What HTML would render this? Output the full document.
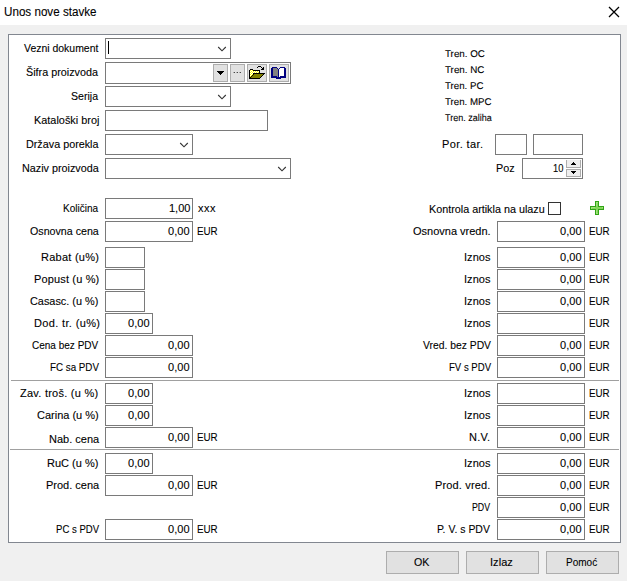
<!DOCTYPE html>
<html lang="sr"><head><meta charset="utf-8"><title>Unos nove stavke</title>
<style>
html,body{margin:0;padding:0}
html{background:#f0f0f0}
body{width:627px;height:581px;background:#f0f0f0;position:relative;overflow:hidden;font-family:"Liberation Sans",sans-serif;font-size:11px;color:#000}
.tb{position:absolute;left:0;top:0;width:627px;height:25px;background:#fff}
.pn{position:absolute;left:8px;top:34px;width:611px;height:507px;background:#fff;border:1px solid #828790}
.t{position:absolute;white-space:pre;line-height:14px;height:14px;-webkit-text-stroke:0.1px #000}
.b{position:absolute;box-sizing:border-box;border:1px solid #7a7a7a;background:#fff}
.v{position:absolute;right:2px;top:3px;line-height:14px;white-space:pre}
.hr{position:absolute;left:11px;width:608px;height:1px;background:#a0a0a0}
.btn{position:absolute;box-sizing:border-box;border:1px solid #adadad;background:#e1e1e1;width:73px;height:23px;top:551px}
.sb{position:absolute;box-sizing:border-box;border:1px solid #adadad;background:#e1e1e1}
svg{display:block}
</style></head><body>
<div class="tb"></div>
<div class="pn"></div>
<svg style="position:absolute;left:608px;top:6px" width="12" height="12" viewBox="0 0 12 12"><path d="M1 1 L11 11 M11 1 L1 11" stroke="#000" stroke-width="1.25" fill="none"/></svg>
<div class="hr" style="top:380px"></div>
<div class="hr" style="top:449px;left:10px;width:609px"></div>
<div class="b" style="left:105px;top:38px;width:126px;height:21px"></div><svg style="position:absolute;left:217px;top:46px" width="10" height="6" viewBox="0 0 10 6"><path d="M1.2 1 L5 4.8 L8.8 1" stroke="#333" stroke-width="1.1" fill="none"/></svg>
<div class="b" style="left:105px;top:86px;width:126px;height:21px"></div><svg style="position:absolute;left:217px;top:94px" width="10" height="6" viewBox="0 0 10 6"><path d="M1.2 1 L5 4.8 L8.8 1" stroke="#333" stroke-width="1.1" fill="none"/></svg>
<div class="b" style="left:105px;top:134px;width:88px;height:21px"></div><svg style="position:absolute;left:179px;top:142px" width="10" height="6" viewBox="0 0 10 6"><path d="M1.2 1 L5 4.8 L8.8 1" stroke="#333" stroke-width="1.1" fill="none"/></svg>
<div class="b" style="left:105px;top:158px;width:186px;height:21px"></div><svg style="position:absolute;left:277px;top:166px" width="10" height="6" viewBox="0 0 10 6"><path d="M1.2 1 L5 4.8 L8.8 1" stroke="#333" stroke-width="1.1" fill="none"/></svg>
<div style="position:absolute;left:108px;top:41px;width:1px;height:13px;background:#000"></div>
<div class="b" style="left:105px;top:62px;width:186px;height:22px"></div>
<div class="sb" style="left:213px;top:64px;width:15px;height:18px"></div><svg style="position:absolute;left:217px;top:71px" width="7" height="4" viewBox="0 0 7 4" shape-rendering="crispEdges"><rect x="0" y="0" width="7" height="1" fill="#000"/><rect x="1" y="1" width="5" height="1" fill="#000"/><rect x="2" y="2" width="3" height="1" fill="#000"/><rect x="3" y="3" width="1" height="1" fill="#000"/></svg>
<div class="sb" style="left:230px;top:64px;width:15px;height:18px"></div><div class="t" style="left:233px;top:63px;font-size:9px;letter-spacing:0.48px;color:#000;will-change:transform">...</div>
<div class="sb" style="left:247px;top:64px;width:20px;height:18px"></div><svg style="position:absolute;left:249px;top:66px" width="16" height="13" viewBox="0 0 16 13" shape-rendering="crispEdges"><rect x="9" y="0" width="3" height="1" fill="#000"/><rect x="8" y="1" width="1" height="1" fill="#000"/><rect x="12" y="1" width="1" height="1" fill="#000"/><rect x="14" y="1" width="1" height="1" fill="#000"/><rect x="13" y="2" width="2" height="1" fill="#000"/><rect x="1" y="3" width="3" height="1" fill="#000"/><rect x="12" y="3" width="3" height="1" fill="#000"/><rect x="0" y="4" width="1" height="1" fill="#000"/><rect x="1" y="4" width="1" height="1" fill="#ffff00"/><rect x="2" y="4" width="1" height="1" fill="#fff"/><rect x="3" y="4" width="1" height="1" fill="#ffff00"/><rect x="4" y="4" width="7" height="1" fill="#000"/><rect x="0" y="5" width="1" height="1" fill="#000"/><rect x="1" y="5" width="1" height="1" fill="#fff"/><rect x="2" y="5" width="1" height="1" fill="#ffff00"/><rect x="3" y="5" width="1" height="1" fill="#fff"/><rect x="4" y="5" width="1" height="1" fill="#ffff00"/><rect x="5" y="5" width="1" height="1" fill="#fff"/><rect x="6" y="5" width="1" height="1" fill="#ffff00"/><rect x="7" y="5" width="1" height="1" fill="#fff"/><rect x="8" y="5" width="1" height="1" fill="#ffff00"/><rect x="9" y="5" width="1" height="1" fill="#fff"/><rect x="10" y="5" width="1" height="1" fill="#000"/><rect x="0" y="6" width="1" height="1" fill="#000"/><rect x="1" y="6" width="1" height="1" fill="#ffff00"/><rect x="2" y="6" width="1" height="1" fill="#fff"/><rect x="3" y="6" width="1" height="1" fill="#ffff00"/><rect x="4" y="6" width="1" height="1" fill="#fff"/><rect x="5" y="6" width="1" height="1" fill="#ffff00"/><rect x="6" y="6" width="1" height="1" fill="#fff"/><rect x="7" y="6" width="1" height="1" fill="#ffff00"/><rect x="8" y="6" width="1" height="1" fill="#fff"/><rect x="9" y="6" width="1" height="1" fill="#ffff00"/><rect x="10" y="6" width="1" height="1" fill="#000"/><rect x="0" y="7" width="1" height="1" fill="#000"/><rect x="1" y="7" width="1" height="1" fill="#fff"/><rect x="2" y="7" width="1" height="1" fill="#ffff00"/><rect x="3" y="7" width="1" height="1" fill="#fff"/><rect x="4" y="7" width="12" height="1" fill="#000"/><rect x="0" y="8" width="1" height="1" fill="#000"/><rect x="1" y="8" width="1" height="1" fill="#ffff00"/><rect x="2" y="8" width="1" height="1" fill="#fff"/><rect x="3" y="8" width="1" height="1" fill="#ffff00"/><rect x="4" y="8" width="1" height="1" fill="#000"/><rect x="5" y="8" width="9" height="1" fill="#808000"/><rect x="14" y="8" width="1" height="1" fill="#000"/><rect x="0" y="9" width="1" height="1" fill="#000"/><rect x="1" y="9" width="1" height="1" fill="#fff"/><rect x="2" y="9" width="1" height="1" fill="#ffff00"/><rect x="3" y="9" width="1" height="1" fill="#000"/><rect x="4" y="9" width="9" height="1" fill="#808000"/><rect x="13" y="9" width="1" height="1" fill="#000"/><rect x="0" y="10" width="1" height="1" fill="#000"/><rect x="1" y="10" width="1" height="1" fill="#ffff00"/><rect x="2" y="10" width="1" height="1" fill="#000"/><rect x="3" y="10" width="9" height="1" fill="#808000"/><rect x="12" y="10" width="1" height="1" fill="#000"/><rect x="0" y="11" width="2" height="1" fill="#000"/><rect x="2" y="11" width="9" height="1" fill="#808000"/><rect x="11" y="11" width="1" height="1" fill="#000"/><rect x="0" y="12" width="11" height="1" fill="#000"/></svg>
<div class="sb" style="left:269px;top:64px;width:20px;height:18px"></div><svg style="position:absolute;left:271px;top:67px" width="15" height="12" viewBox="0 0 15 12" shape-rendering="crispEdges"><rect x="1" y="0" width="5" height="1" fill="#000080"/><rect x="9" y="0" width="5" height="1" fill="#000080"/><rect x="0" y="1" width="2" height="1" fill="#000080"/><rect x="2" y="1" width="4" height="1" fill="#808080"/><rect x="6" y="1" width="1" height="1" fill="#000080"/><rect x="8" y="1" width="1" height="1" fill="#000080"/><rect x="9" y="1" width="4" height="1" fill="#fff"/><rect x="13" y="1" width="2" height="1" fill="#000080"/><rect x="0" y="2" width="2" height="1" fill="#000080"/><rect x="2" y="2" width="5" height="1" fill="#808080"/><rect x="7" y="2" width="1" height="1" fill="#000080"/><rect x="8" y="2" width="5" height="1" fill="#fff"/><rect x="13" y="2" width="2" height="1" fill="#000080"/><rect x="0" y="3" width="2" height="1" fill="#000080"/><rect x="2" y="3" width="5" height="1" fill="#808080"/><rect x="7" y="3" width="1" height="1" fill="#000080"/><rect x="8" y="3" width="5" height="1" fill="#fff"/><rect x="13" y="3" width="2" height="1" fill="#000080"/><rect x="0" y="4" width="2" height="1" fill="#000080"/><rect x="2" y="4" width="5" height="1" fill="#808080"/><rect x="7" y="4" width="1" height="1" fill="#000080"/><rect x="8" y="4" width="5" height="1" fill="#fff"/><rect x="13" y="4" width="2" height="1" fill="#000080"/><rect x="0" y="5" width="2" height="1" fill="#000080"/><rect x="2" y="5" width="5" height="1" fill="#808080"/><rect x="7" y="5" width="1" height="1" fill="#000080"/><rect x="8" y="5" width="5" height="1" fill="#fff"/><rect x="13" y="5" width="2" height="1" fill="#000080"/><rect x="0" y="6" width="2" height="1" fill="#000080"/><rect x="2" y="6" width="5" height="1" fill="#808080"/><rect x="7" y="6" width="1" height="1" fill="#000080"/><rect x="8" y="6" width="5" height="1" fill="#fff"/><rect x="13" y="6" width="2" height="1" fill="#000080"/><rect x="0" y="7" width="2" height="1" fill="#000080"/><rect x="2" y="7" width="5" height="1" fill="#808080"/><rect x="7" y="7" width="1" height="1" fill="#000080"/><rect x="8" y="7" width="5" height="1" fill="#fff"/><rect x="13" y="7" width="2" height="1" fill="#000080"/><rect x="0" y="8" width="2" height="1" fill="#000080"/><rect x="2" y="8" width="5" height="1" fill="#808080"/><rect x="7" y="8" width="1" height="1" fill="#000080"/><rect x="8" y="8" width="5" height="1" fill="#fff"/><rect x="13" y="8" width="2" height="1" fill="#000080"/><rect x="0" y="9" width="6" height="1" fill="#000080"/><rect x="6" y="9" width="1" height="1" fill="#808080"/><rect x="7" y="9" width="1" height="1" fill="#000080"/><rect x="8" y="9" width="1" height="1" fill="#fff"/><rect x="9" y="9" width="6" height="1" fill="#000080"/><rect x="0" y="10" width="15" height="1" fill="#000080"/><rect x="5" y="11" width="5" height="1" fill="#000080"/></svg>
<div class="b" style="left:105px;top:110px;width:163px;height:21px"></div>
<div class="b" style="left:105px;top:198px;width:88px;height:21px"></div>
<div class="b" style="left:105px;top:221px;width:88px;height:21px"></div>
<div class="b" style="left:105px;top:247px;width:40px;height:21px"></div>
<div class="b" style="left:105px;top:269px;width:40px;height:21px"></div>
<div class="b" style="left:105px;top:291px;width:40px;height:21px"></div>
<div class="b" style="left:105px;top:313px;width:48px;height:21px"></div>
<div class="b" style="left:105px;top:335px;width:88px;height:21px"></div>
<div class="b" style="left:105px;top:357px;width:88px;height:21px"></div>
<div class="b" style="left:105px;top:383px;width:48px;height:21px"></div>
<div class="b" style="left:105px;top:405px;width:48px;height:21px"></div>
<div class="b" style="left:105px;top:427px;width:88px;height:21px"></div>
<div class="b" style="left:105px;top:453px;width:48px;height:21px"></div>
<div class="b" style="left:105px;top:475px;width:88px;height:21px"></div>
<div class="b" style="left:105px;top:519px;width:88px;height:21px"></div>
<div class="b" style="left:497px;top:221px;width:88px;height:21px"></div>
<div class="b" style="left:497px;top:247px;width:88px;height:21px"></div>
<div class="b" style="left:497px;top:269px;width:88px;height:21px"></div>
<div class="b" style="left:497px;top:291px;width:88px;height:21px"></div>
<div class="b" style="left:497px;top:313px;width:88px;height:21px"></div>
<div class="b" style="left:497px;top:335px;width:88px;height:21px"></div>
<div class="b" style="left:497px;top:357px;width:88px;height:21px"></div>
<div class="b" style="left:497px;top:383px;width:88px;height:21px"></div>
<div class="b" style="left:497px;top:405px;width:88px;height:21px"></div>
<div class="b" style="left:497px;top:427px;width:88px;height:21px"></div>
<div class="b" style="left:497px;top:453px;width:88px;height:21px"></div>
<div class="b" style="left:497px;top:475px;width:88px;height:21px"></div>
<div class="b" style="left:497px;top:497px;width:88px;height:21px"></div>
<div class="b" style="left:497px;top:519px;width:88px;height:21px"></div>
<div class="b" style="left:495px;top:134px;width:32px;height:21px"></div>
<div class="b" style="left:533px;top:134px;width:50px;height:21px"></div>
<div class="b" style="left:522px;top:158px;width:61px;height:21px"></div><div class="sb" style="left:566px;top:160px;width:15px;height:8px;border-top:0;background:#efefef"></div><svg style="position:absolute;left:571px;top:162px" width="5" height="3" viewBox="0 0 5 3" shape-rendering="crispEdges"><rect x="2" y="0" width="1" height="1" fill="#000"/><rect x="1" y="1" width="3" height="1" fill="#000"/><rect x="0" y="2" width="5" height="1" fill="#000"/></svg><div class="sb" style="left:566px;top:169px;width:15px;height:8px;background:#efefef"></div><svg style="position:absolute;left:571px;top:171px" width="5" height="3" viewBox="0 0 5 3" shape-rendering="crispEdges"><rect x="0" y="0" width="5" height="1" fill="#000"/><rect x="1" y="1" width="3" height="1" fill="#000"/><rect x="2" y="2" width="1" height="1" fill="#000"/></svg>
<div style="position:absolute;left:548px;top:202px;width:13px;height:13px;box-sizing:border-box;border:1px solid #333;background:#fff"></div>
<svg style="position:absolute;left:590px;top:201px" width="14" height="14" viewBox="0 0 14 14" shape-rendering="crispEdges"><rect x="5" y="0" width="4" height="1" fill="#31a416"/><rect x="5" y="1" width="1" height="1" fill="#31a416"/><rect x="6" y="1" width="2" height="1" fill="#a0e37b"/><rect x="8" y="1" width="1" height="1" fill="#31a416"/><rect x="5" y="2" width="1" height="1" fill="#31a416"/><rect x="6" y="2" width="1" height="1" fill="#a0e37b"/><rect x="7" y="2" width="1" height="1" fill="#82d559"/><rect x="8" y="2" width="1" height="1" fill="#31a416"/><rect x="5" y="3" width="1" height="1" fill="#31a416"/><rect x="6" y="3" width="1" height="1" fill="#a0e37b"/><rect x="7" y="3" width="1" height="1" fill="#82d559"/><rect x="8" y="3" width="1" height="1" fill="#31a416"/><rect x="5" y="4" width="1" height="1" fill="#31a416"/><rect x="6" y="4" width="1" height="1" fill="#a0e37b"/><rect x="7" y="4" width="1" height="1" fill="#82d559"/><rect x="8" y="4" width="1" height="1" fill="#31a416"/><rect x="0" y="5" width="6" height="1" fill="#31a416"/><rect x="6" y="5" width="2" height="1" fill="#82d559"/><rect x="8" y="5" width="6" height="1" fill="#31a416"/><rect x="0" y="6" width="1" height="1" fill="#31a416"/><rect x="1" y="6" width="4" height="1" fill="#a0e37b"/><rect x="5" y="6" width="7" height="1" fill="#82d559"/><rect x="12" y="6" width="1" height="1" fill="#a0e37b"/><rect x="13" y="6" width="1" height="1" fill="#31a416"/><rect x="0" y="7" width="1" height="1" fill="#31a416"/><rect x="1" y="7" width="1" height="1" fill="#a0e37b"/><rect x="2" y="7" width="11" height="1" fill="#82d559"/><rect x="13" y="7" width="1" height="1" fill="#31a416"/><rect x="0" y="8" width="6" height="1" fill="#31a416"/><rect x="6" y="8" width="2" height="1" fill="#82d559"/><rect x="8" y="8" width="6" height="1" fill="#31a416"/><rect x="5" y="9" width="1" height="1" fill="#31a416"/><rect x="6" y="9" width="1" height="1" fill="#a0e37b"/><rect x="7" y="9" width="1" height="1" fill="#82d559"/><rect x="8" y="9" width="1" height="1" fill="#31a416"/><rect x="5" y="10" width="1" height="1" fill="#31a416"/><rect x="6" y="10" width="1" height="1" fill="#a0e37b"/><rect x="7" y="10" width="1" height="1" fill="#82d559"/><rect x="8" y="10" width="1" height="1" fill="#31a416"/><rect x="5" y="11" width="1" height="1" fill="#31a416"/><rect x="6" y="11" width="1" height="1" fill="#a0e37b"/><rect x="7" y="11" width="1" height="1" fill="#82d559"/><rect x="8" y="11" width="1" height="1" fill="#31a416"/><rect x="5" y="12" width="1" height="1" fill="#31a416"/><rect x="6" y="12" width="2" height="1" fill="#a0e37b"/><rect x="8" y="12" width="1" height="1" fill="#31a416"/><rect x="5" y="13" width="4" height="1" fill="#31a416"/></svg>
<div class="btn" style="left:386px"></div>
<div class="btn" style="left:466px"></div>
<div class="btn" style="left:546px"></div>
<div class="t" style="left:24px;top:41px;transform:scaleX(0.95);transform-origin:0 0">Vezni dokument</div>
<div class="t" style="left:26px;top:65px;transform:scaleX(0.98);transform-origin:0 0">Šifra proizvoda</div>
<div class="t" style="left:71px;top:89px;transform:scaleX(0.96);transform-origin:0 0">Serija</div>
<div class="t" style="left:34px;top:113px;transform:scaleX(0.99);transform-origin:0 0">Kataloški broj</div>
<div class="t" style="left:26px;top:137px;transform:scaleX(0.98);transform-origin:0 0">Država porekla</div>
<div class="t" style="left:22px;top:161px;transform:scaleX(0.98);transform-origin:0 0">Naziv proizvoda</div>
<div class="t" style="left:63px;top:201px;transform:scaleX(0.91);transform-origin:0 0">Količina</div>
<div class="t" style="left:30px;top:224px;transform:scaleX(0.97);transform-origin:0 0">Osnovna cena</div>
<div class="t" style="left:41px;top:250px;letter-spacing:0.25px">Rabat (u%)</div>
<div class="t" style="left:34px;top:272px;letter-spacing:0.15px">Popust (u %)</div>
<div class="t" style="left:30px;top:294px;transform:scaleX(0.99);transform-origin:0 0">Casasc. (u %)</div>
<div class="t" style="left:34px;top:316px;letter-spacing:0.35px">Dod. tr. (u%)</div>
<div class="t" style="left:32px;top:338px;transform:scaleX(0.91);transform-origin:0 0">Cena bez PDV</div>
<div class="t" style="left:50px;top:360px;transform:scaleX(0.89);transform-origin:0 0">FC sa PDV</div>
<div class="t" style="left:20px;top:386px;letter-spacing:0.25px">Zav. troš. (u %)</div>
<div class="t" style="left:37px;top:408px">Carina (u %)</div>
<div class="t" style="left:49px;top:432px">Nab. cena</div>
<div class="t" style="left:47px;top:456px">RuC (u %)</div>
<div class="t" style="left:46px;top:478px">Prod. cena</div>
<div class="t" style="left:56px;top:522px;transform:scaleX(0.87);transform-origin:0 0">PC s PDV</div>
<div class="t" style="left:169px;top:201px">1,00</div>
<div class="t" style="left:168px;top:224px;letter-spacing:0.05px">0,00</div>
<div class="t" style="left:128px;top:316px;letter-spacing:0.05px">0,00</div>
<div class="t" style="left:168px;top:338px;letter-spacing:0.05px">0,00</div>
<div class="t" style="left:168px;top:360px;letter-spacing:0.05px">0,00</div>
<div class="t" style="left:128px;top:386px;letter-spacing:0.05px">0,00</div>
<div class="t" style="left:128px;top:408px;letter-spacing:0.05px">0,00</div>
<div class="t" style="left:168px;top:430px;letter-spacing:0.05px">0,00</div>
<div class="t" style="left:128px;top:456px;letter-spacing:0.05px">0,00</div>
<div class="t" style="left:168px;top:478px;letter-spacing:0.05px">0,00</div>
<div class="t" style="left:168px;top:522px;letter-spacing:0.05px">0,00</div>
<div class="t" style="left:560px;top:224px;letter-spacing:0.05px">0,00</div>
<div class="t" style="left:413px;top:224px">Osnovna vredn.</div>
<div class="t" style="left:589px;top:224px;transform:scaleX(0.89);transform-origin:0 0">EUR</div>
<div class="t" style="left:560px;top:250px;letter-spacing:0.05px">0,00</div>
<div class="t" style="left:464px;top:250px;letter-spacing:0.05px">Iznos</div>
<div class="t" style="left:589px;top:250px;transform:scaleX(0.89);transform-origin:0 0">EUR</div>
<div class="t" style="left:560px;top:272px;letter-spacing:0.05px">0,00</div>
<div class="t" style="left:464px;top:272px;letter-spacing:0.05px">Iznos</div>
<div class="t" style="left:589px;top:272px;transform:scaleX(0.89);transform-origin:0 0">EUR</div>
<div class="t" style="left:560px;top:294px;letter-spacing:0.05px">0,00</div>
<div class="t" style="left:464px;top:294px;letter-spacing:0.05px">Iznos</div>
<div class="t" style="left:589px;top:294px;transform:scaleX(0.89);transform-origin:0 0">EUR</div>
<div class="t" style="left:464px;top:316px;letter-spacing:0.05px">Iznos</div>
<div class="t" style="left:589px;top:316px;transform:scaleX(0.89);transform-origin:0 0">EUR</div>
<div class="t" style="left:560px;top:338px;letter-spacing:0.05px">0,00</div>
<div class="t" style="left:423px;top:338px;transform:scaleX(0.94);transform-origin:0 0">Vred. bez PDV</div>
<div class="t" style="left:589px;top:338px;transform:scaleX(0.89);transform-origin:0 0">EUR</div>
<div class="t" style="left:560px;top:360px;letter-spacing:0.05px">0,00</div>
<div class="t" style="left:449px;top:360px;transform:scaleX(0.87);transform-origin:0 0">FV s PDV</div>
<div class="t" style="left:589px;top:360px;transform:scaleX(0.89);transform-origin:0 0">EUR</div>
<div class="t" style="left:464px;top:386px;letter-spacing:0.05px">Iznos</div>
<div class="t" style="left:589px;top:386px;transform:scaleX(0.89);transform-origin:0 0">EUR</div>
<div class="t" style="left:464px;top:408px;letter-spacing:0.05px">Iznos</div>
<div class="t" style="left:589px;top:408px;transform:scaleX(0.89);transform-origin:0 0">EUR</div>
<div class="t" style="left:560px;top:430px;letter-spacing:0.05px">0,00</div>
<div class="t" style="left:469px;top:430px;letter-spacing:0.20px">N.V.</div>
<div class="t" style="left:589px;top:430px;transform:scaleX(0.89);transform-origin:0 0">EUR</div>
<div class="t" style="left:560px;top:456px;letter-spacing:0.05px">0,00</div>
<div class="t" style="left:464px;top:456px;letter-spacing:0.05px">Iznos</div>
<div class="t" style="left:589px;top:456px;transform:scaleX(0.89);transform-origin:0 0">EUR</div>
<div class="t" style="left:560px;top:478px;letter-spacing:0.05px">0,00</div>
<div class="t" style="left:435px;top:478px;letter-spacing:0.15px">Prod. vred.</div>
<div class="t" style="left:589px;top:478px;transform:scaleX(0.89);transform-origin:0 0">EUR</div>
<div class="t" style="left:560px;top:500px;letter-spacing:0.05px">0,00</div>
<div class="t" style="left:472px;top:500px;transform:scaleX(0.8);transform-origin:0 0">PDV</div>
<div class="t" style="left:589px;top:500px;transform:scaleX(0.89);transform-origin:0 0">EUR</div>
<div class="t" style="left:560px;top:522px;letter-spacing:0.05px">0,00</div>
<div class="t" style="left:437px;top:522px;transform:scaleX(0.95);transform-origin:0 0">P. V. s PDV</div>
<div class="t" style="left:589px;top:522px;transform:scaleX(0.89);transform-origin:0 0">EUR</div>
<div class="t" style="left:198px;top:201px;letter-spacing:0.45px">xxx</div>
<div class="t" style="left:197px;top:224px;transform:scaleX(0.89);transform-origin:0 0">EUR</div>
<div class="t" style="left:197px;top:430px;transform:scaleX(0.89);transform-origin:0 0">EUR</div>
<div class="t" style="left:197px;top:478px;transform:scaleX(0.89);transform-origin:0 0">EUR</div>
<div class="t" style="left:197px;top:522px;transform:scaleX(0.89);transform-origin:0 0">EUR</div>
<div class="t" style="left:445px;top:48px;font-size:9.8px;text-rendering:geometricPrecision">Tren. OC</div>
<div class="t" style="left:445px;top:64px;font-size:9.8px;text-rendering:geometricPrecision">Tren. NC</div>
<div class="t" style="left:445px;top:80px;font-size:9.8px;text-rendering:geometricPrecision;transform:scaleX(0.99);transform-origin:0 0">Tren. PC</div>
<div class="t" style="left:445px;top:96px;font-size:9.8px;text-rendering:geometricPrecision;transform:scaleX(0.99);transform-origin:0 0">Tren. MPC</div>
<div class="t" style="left:445px;top:112px;font-size:9.8px;text-rendering:geometricPrecision;transform:scaleX(0.92);transform-origin:0 0">Tren. zaliha</div>
<div class="t" style="left:442px;top:137px;letter-spacing:0.40px">Por. tar.</div>
<div class="t" style="left:496px;top:161px;transform:scaleX(0.98);transform-origin:0 0">Poz</div>
<div class="t" style="left:553px;top:161px;transform:scaleX(0.85);transform-origin:0 0">10</div>
<div class="t" style="left:429px;top:202px;transform:scaleX(0.98);transform-origin:0 0">Kontrola artikla na ulazu</div>
<div class="t" style="left:4px;top:5px;font-size:12px;transform:scaleX(0.97);transform-origin:0 0">Unos nove stavke</div>
<div class="t" style="left:414px;top:555px;transform:scaleX(0.97);transform-origin:0 0">OK</div>
<div class="t" style="left:490px;top:555px;letter-spacing:0.05px">Izlaz</div>
<div class="t" style="left:566px;top:555px;transform:scaleX(0.91);transform-origin:0 0">Pomoć</div>
</body></html>
